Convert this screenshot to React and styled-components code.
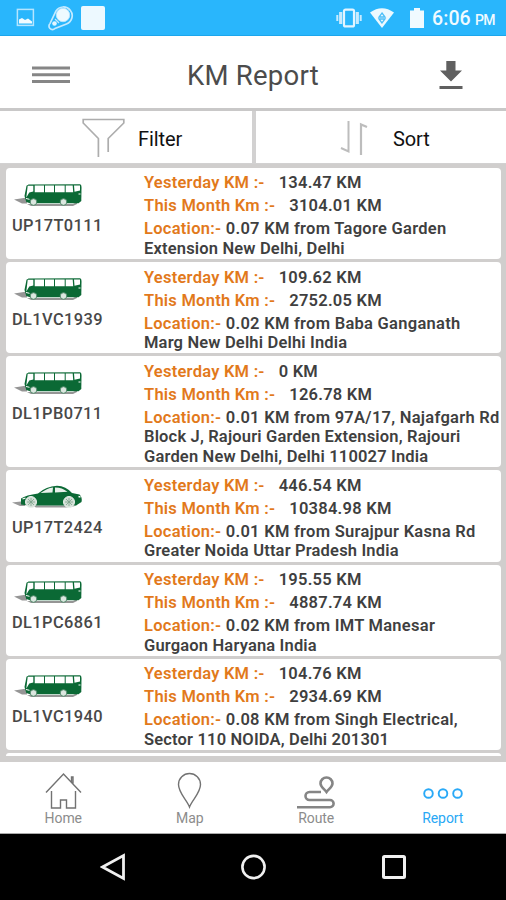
import React from "react";
import styled, { createGlobalStyle } from "styled-components";

const Global = createGlobalStyle`
  * { box-sizing: border-box; }
  body { margin: 0; background: #fff; font-family: Roboto, "Liberation Sans", sans-serif; }
  svg { display: block; flex: none; }
`;

const Screen = styled.div`
  width: 506px;
  height: 900px;
  display: flex;
  flex-direction: column;
  overflow: hidden;
  background: #d0cecd;
`;

const StatusBar = styled.div`
  height: 36px;
  flex: none;
  display: flex;
  align-items: center;
  justify-content: space-between;
  padding: 0 11px 0 16px;
  background: #29b6fc;
  border-bottom: 1px solid #1ca6ec;
`;

const StatusGroup = styled.div`
  display: flex;
  align-items: center;
`;

const Clock = styled.div`
  width: 63px;
  margin-left: 9px;
  padding-top: 4px;
  display: flex;
  align-items: baseline;
  justify-content: space-between;
  white-space: nowrap;
  color: #f0faff;
  font-size: 19.5px;
  font-weight: 500;
  line-height: 24px;
  letter-spacing: 0.1px;
`;

const Meridiem = styled.span`
  font-size: 14px;
  letter-spacing: -0.6px;
`;

const Header = styled.header`
  height: 72px;
  flex: none;
  display: flex;
  align-items: center;
  justify-content: space-between;
  padding: 6px 43px 0 32px;
  background: #fff;
`;

const Title = styled.h1`
  margin: 2px 0 0 -3px;
  font-size: 27.5px;
  font-weight: 400;
  letter-spacing: 0.25px;
  line-height: 32px;
  color: #4c4c4c;
  white-space: nowrap;
`;

const Tools = styled.div`
  height: 56px;
  flex: none;
  display: grid;
  grid-template-columns: 252px 250px;
  column-gap: 4px;
  border-top: 3px solid #c9c8c8;
  background: #d2d1d1;
`;

const ToolButton = styled.button`
  height: 52px;
  display: flex;
  align-items: center;
  gap: ${(p) => p.$gap}px;
  border: 0;
  padding: 2px 0 0 ${(p) => p.$inset}px;
  background: #fff;
  color: #111;
  font: 400 20px/24px Roboto, sans-serif;
  letter-spacing: -0.1px;
`;

const ToolLabel = styled.span`
  padding-top: 2px;
`;

const List = styled.main`
  flex: 1;
  min-height: 0;
  overflow: hidden;
  display: flex;
  flex-direction: column;
  gap: 3px;
  padding: 4px 5px 0 6px;
  background: #d0cecd;
`;

const Card = styled.article`
  flex: none;
  height: ${(p) => (p.$lines === 3 ? 111 : 91.2)}px;
  display: grid;
  grid-template-columns: 138px 1fr;
  border-radius: 4px;
  background: #fff;
`;

const NextCard = styled.div`
  flex: none;
  height: 3px;
  border-radius: 3px 3px 0 0;
  background: #fff;
`;

const Vehicle = styled.div`
  padding: 14px 0 0 6px;
`;

const Plate = styled.div`
  margin-top: 7px;
  font-size: 16.4px;
  font-weight: 500;
  line-height: 20px;
  letter-spacing: 0.4px;
  color: #484848;
`;

const Details = styled.div`
  padding-top: 3.4px;
  font-size: 16.5px;
  font-weight: 600;
  letter-spacing: 0.17px;
  color: #3f3f3f;
  white-space: nowrap;
`;

const Stat = styled.div`
  height: 23px;
  line-height: 23px;
  display: flex;
  gap: ${(p) => p.$gap}px;
  letter-spacing: 0.24px;
`;

const Label = styled.span`
  color: #e2791b;
`;

const Place = styled.div`
  margin-top: 2px;
  line-height: 19.6px;
`;

const PlaceLine = styled.div`
  height: 19.6px;
  &:first-child { letter-spacing: 0.27px; }
`;

const NavBar = styled.nav`
  height: 72px;
  flex: none;
  display: grid;
  grid-template-columns: repeat(4, 1fr);
  background: #fff;
  border-bottom: 1px solid #aaa;
`;

const NavItem = styled.div`
  display: flex;
  flex-direction: column;
  align-items: center;
  padding-top: 9px;
  font-size: 14px;
  line-height: 16px;
  letter-spacing: -0.1px;
  color: ${(p) => (p.$active ? "#29a8f5" : "#8c8c8c")};
`;

const NavLabel = styled.span`
  margin-top: 1px;
`;

const SystemBar = styled.div`
  height: 66px;
  flex: none;
  display: flex;
  justify-content: center;
  align-items: center;
  gap: 114px;
  background: #000;
`;

const ImageIcon = () => (
  <svg width="19" height="19" viewBox="0 0 19 19">
    <rect x="1.4" y="1.4" width="16" height="16" fill="none" stroke="#b5e5ff" strokeWidth="1.5" />
    <path d="M3 15.500v-4l3-1.500 3 2 3-1.500 4 3v2z" fill="#f2fbff" />
  </svg>
);

const TrackerIcon = () => (
  <svg width="26" height="26" viewBox="0 0 26 26">
    <path d="M2 18.500 8 6A8.800 8.800 0 1 1 18.500 19L7 23.500a3 3 0 0 1-5-5z" fill="none" stroke="#c4eaff" strokeWidth="1.700" />
    <circle cx="15" cy="10" r="6.700" fill="#eefaff" stroke="#b8e6ff" />
    <circle cx="6.500" cy="18.500" r="2.300" fill="#e4f6ff" />
    <path d="M7 14l4 4" stroke="#c4eaff" strokeWidth="1.300" />
  </svg>
);

const AppSquare = () => (
  <svg width="26" height="26" viewBox="0 0 26 26">
    <rect x="1" y="1" width="24" height="24" rx="2" fill="#edf9ff" />
  </svg>
);

const VibrateIcon = () => (
  <svg width="26" height="20" viewBox="0 0 26 20">
    <rect x="8" y="1.600" width="10" height="16.800" rx="1.500" fill="none" stroke="#e3f5ff" strokeWidth="2.200" />
    <path d="M4.700 4v12M21.300 4v12" stroke="#c8ebff" strokeWidth="3.200" />
    <path d="M1.300 7v6M24.700 7v6" stroke="#c8ebff" strokeWidth="2" />
  </svg>
);

const WifiIcon = () => (
  <svg width="24" height="20" viewBox="0 0 24 20">
    <path d="M0 4.500Q12-4 24 4.500L12 20z" fill="#ecf9ff" />
    <path d="M12 5l3 4h-6zM12 15l-3-4h6z" fill="none" stroke="#4dbff8" strokeWidth="1.300" />
  </svg>
);

const BatteryIcon = () => (
  <svg width="14" height="20" viewBox="0 0 14 20">
    <path d="M4 0h6v2.500h4V20H0V2.500h4z" fill="#f0faff" />
  </svg>
);

const MenuIcon = () => (
  <svg width="38" height="18" viewBox="0 0 38 18">
    <path d="M0 2h38M0 8.800h38M0 15.600h38" stroke="#868686" strokeWidth="3" />
  </svg>
);

const DownloadIcon = () => (
  <svg width="24" height="30" viewBox="0 0 24 30">
    <path d="M7.300 1h9.200v9.500h6.500L12 21.500 1 10.500h6.300zM.5 26h23v3H.5z" fill="#606060" />
  </svg>
);

const FilterIcon = () => (
  <svg width="43" height="40" viewBox="0 0 43 40">
    <path d="M16.400 39V20.500L1.200 5V1.500H41.800V5L26.200 20.500V34" fill="none" stroke="#adadad" strokeWidth="1.700" />
  </svg>
);

const SortIcon = () => (
  <svg width="30" height="36" viewBox="0 0 30 36">
    <path d="M9.500 1v30.500L2 28" fill="none" stroke="#bdbdbd" strokeWidth="2" />
    <path d="M22 35V4.500L28 7" fill="none" stroke="#bdbdbd" strokeWidth="2.200" />
  </svg>
);

const BusIcon = () => (
  <svg width="72" height="27" viewBox="0 0 72 27">
    <path d="M2 17.500 15 15.500v6H10zM15 22h46l4-2v2l-4 2H19z" fill="#959595" />
    <path d="M14.500 3.800 16.500 2.500 68 2.200Q69.500 2.300 69.500 5L69.300 19 66.500 21.300H18L14.300 20 12.500 14z" fill="#0b6935" />
    <path d="M15.700 3.800h5.600v5.800l-4 .8-3 5zM22.700 3.600h9.300v6.600h-9.300zM33 3.600h9v6.600h-9zM43 3.500h9.700v6.700h-9.700zM53.700 3.500h7l.5 6.700h-7.500zM62 3.500H68v5.100l-5.500 1.200z" fill="#fff" />
    <path d="M14 16.500l3.500.8M66.500 12h2" stroke="#fff" />
    <circle cx="21.500" cy="20" r="3.300" fill="#dce7e0" stroke="#548c6d" />
    <circle cx="51.500" cy="20" r="3.300" fill="#dce7e0" stroke="#548c6d" />
  </svg>
);

const CarIcon = () => (
  <svg width="74" height="27" viewBox="0 0 74 27">
    <path d="M0 18.500l13-1.500v5H8zM20 21.500h45l-8 2H24z" fill="#999" />
    <path d="M9 20.500V14.500Q14 11 26 9.500Q34 2.200 45 1.700Q54 2 60 9L67.500 10.500Q70.500 13 69.500 18L64 21.500H16z" fill="#0b6935" />
    <path d="M28.500 9Q35 4 41 3.400L40.500 8.500zM43 3.400Q50 3.300 55.500 7.700L43 8.500z" fill="#eaf1ec" />
    <path d="M10.500 15l3-1M66.500 12.500l2 .5" stroke="#fff" strokeWidth="1.300" />
    {[19, 57].map((cx) => (
      <g key={cx}>
        <circle cx={cx} cy="18" r="5.500" fill="#d4dfd7" stroke="#e9f0eb" />
        <path d={`M${cx - 4} 18h8M${cx} 14v8M${cx - 3} 15l6 6M${cx + 3} 15l-6 6`} stroke="#7ca28a" strokeWidth=".8" />
      </g>
    ))}
  </svg>
);

const HomeIcon = () => (
  <svg width="37" height="38" viewBox="0 0 37 38">
    <path d="M1 21.500 18.500 3 36 21.500M26.500 11V6h1.500v6.500M6.500 20v17h9v-8h6v8h9V20" fill="none" stroke="#727272" strokeWidth="1.400" />
  </svg>
);

const MapIcon = () => (
  <svg width="25" height="38" viewBox="0 0 25 38">
    <path d="M12.500 36C10 29 1.500 22 1.500 13.500a11 11 0 0 1 22 0C23.500 22 15 29 12.500 36z" fill="none" stroke="#737373" strokeWidth="1.400" />
  </svg>
);

const RouteIcon = () => (
  <svg width="40" height="38" viewBox="0 0 40 38">
    <path d="M30.500 21C28.500 18 24.500 16 24.500 12.500a6 6 0 0 1 12 0C36.500 16 32.500 18 30.500 21zM25 21H13.500a4 4 0 0 0 0 8H34a3.600 3.600 0 0 1 0 7.200H1" fill="none" stroke="#858585" strokeWidth="2.600" />
  </svg>
);

const ReportIcon = () => (
  <svg width="40" height="38" viewBox="0 0 40 38">
    {[5.5, 20, 34.500].map((cx) => (
      <circle key={cx} cx={cx} cy="22.500" r="4.300" fill="none" stroke="#29a9f7" strokeWidth="1.900" />
    ))}
  </svg>
);

const BackIcon = () => (
  <svg width="26" height="28" viewBox="0 0 26 28">
    <path d="M2.500 14 23.500 2.500v23z" fill="none" stroke="#f0f0f0" strokeWidth="2.800" />
  </svg>
);

const CircleIcon = () => (
  <svg width="26" height="26" viewBox="0 0 26 26">
    <circle cx="13.500" cy="13" r="11.100" fill="none" stroke="#f0f0f0" strokeWidth="2.600" />
  </svg>
);

const SquareIcon = () => (
  <svg width="26" height="26" viewBox="0 0 26 26">
    <rect x="3.500" y="2.500" width="21" height="21" rx="1" fill="none" stroke="#f0f0f0" strokeWidth="3" />
  </svg>
);

const vehicles = [
  { plate: "UP17T0111", day: "134.47", month: "3104.01", place: ["0.07 KM from Tagore Garden", "Extension New Delhi, Delhi"] },
  { plate: "DL1VC1939", day: "109.62", month: "2752.05", place: ["0.02 KM from Baba Ganganath", "Marg New Delhi Delhi India"] },
  { plate: "DL1PB0711", day: "0", month: "126.78", place: ["0.01 KM from 97A/17, Najafgarh Rd", "Block J, Rajouri Garden Extension, Rajouri", "Garden New Delhi, Delhi 110027 India"] },
  { plate: "UP17T2424", car: true, day: "446.54", month: "10384.98", place: ["0.01 KM from Surajpur Kasna Rd", "Greater Noida Uttar Pradesh India"] },
  { plate: "DL1PC6861", day: "195.55", month: "4887.74", place: ["0.02 KM from IMT Manesar", "Gurgaon Haryana India"] },
  { plate: "DL1VC1940", day: "104.76", month: "2934.69", place: ["0.08 KM from Singh Electrical,", "Sector 110 NOIDA, Delhi 201301"] },
];

const tabs = [
  { label: "Home", Icon: HomeIcon },
  { label: "Map", Icon: MapIcon },
  { label: "Route", Icon: RouteIcon },
  { label: "Report", Icon: ReportIcon, active: true },
];

const StatusLeft = styled(StatusGroup)`
  gap: 12.5px;
  & > :last-child { margin-left: -6px; }
`;

const StatusRight = styled(StatusGroup)`
  gap: 8.5px;
  & > :nth-child(3) { margin-left: 7px; }
  & > :last-child { margin-left: 0; }
`;

export default function App() {
  return (
    <Screen>
      <Global />
      <StatusBar>
        <StatusLeft><ImageIcon /><TrackerIcon /><AppSquare /></StatusLeft>
        <StatusRight>
          <VibrateIcon /><WifiIcon /><BatteryIcon />
          <Clock><span>6:06</span><Meridiem>PM</Meridiem></Clock>
        </StatusRight>
      </StatusBar>
      <Header>
        <MenuIcon />
        <Title>KM Report</Title>
        <DownloadIcon />
      </Header>
      <Tools>
        <ToolButton $inset={81.5} $gap={13.5}><FilterIcon /><ToolLabel>Filter</ToolLabel></ToolButton>
        <ToolButton $inset={83} $gap={24}><SortIcon /><ToolLabel>Sort</ToolLabel></ToolButton>
      </Tools>
      <List>
        {vehicles.map((v) => (
          <Card key={v.plate} $lines={v.place.length}>
            <Vehicle>
              {v.car ? <CarIcon /> : <BusIcon />}
              <Plate>{v.plate}</Plate>
            </Vehicle>
            <Details>
              <Stat $gap={14}><Label>Yesterday KM :-</Label><span>{v.day} KM</span></Stat>
              <Stat $gap={14}><Label>This Month Km :-</Label><span>{v.month} KM</span></Stat>
              <Place>
                {v.place.map((line, i) => (
                  <PlaceLine key={line}>{i === 0 && <Label>Location:- </Label>}{line}</PlaceLine>
                ))}
              </Place>
            </Details>
          </Card>
        ))}
        <NextCard />
      </List>
      <NavBar>
        {tabs.map(({ label, Icon, active }) => (
          <NavItem key={label} $active={active}><Icon /><NavLabel>{label}</NavLabel></NavItem>
        ))}
      </NavBar>
      <SystemBar><BackIcon /><CircleIcon /><SquareIcon /></SystemBar>
    </Screen>
  );
}
